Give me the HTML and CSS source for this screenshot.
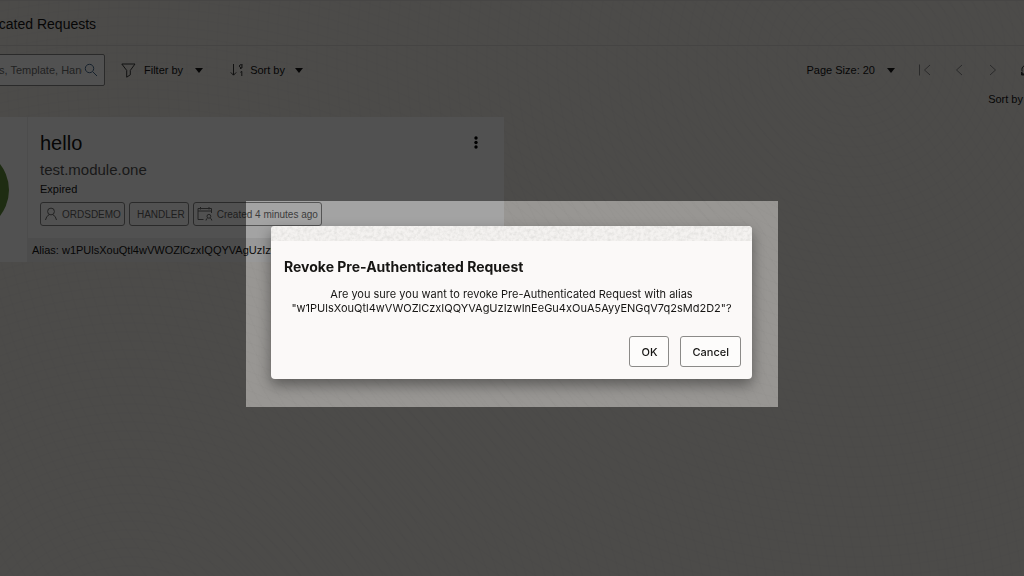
FILE: index.html
```
<!DOCTYPE html>
<html lang="en">
<head>
  <meta charset="utf-8">
  <title>Pre-Authenticated Requests</title>
  <link rel="stylesheet" href="styles.css">
</head>
<body>
  <div class="page">
    <header class="page-header">
      <h1>Pre-Authenticated Requests</h1>
    </header>

    <div class="toolbar">
      <div class="search">
        <input type="text" id="search" aria-label="Search" placeholder="Search Modules, Template, Handler">
        <svg class="icon" width="14" height="14" viewBox="0 0 14 14"><circle cx="5.5" cy="5.5" r="4.2"/><path d="M8.6 8.6L13 13"/></svg>
      </div>
      <button class="tool filter">
        <svg class="icon" width="15" height="15" viewBox="0 0 15 15"><path d="M.8 1h13.2L9.3 7.4v4.4l-3.6 2.4V7.4z"/></svg>
        Filter by
        <span class="caret"></span>
      </button>
      <button class="tool sort">
        <svg class="icon" width="14" height="14" viewBox="0 0 14 14"><path d="M3.5 1v11M.8 9.4l2.7 2.8 2.7-2.8M12 3.8a1.4 1.4 0 1 1 0-1.4M12 1v3.6q-.2 1.2-2 .9M10.4 9.3l1.4-.9V13"/></svg>
        Sort by
        <span class="caret"></span>
      </button>
      <button class="tool page-size">Page Size: 20 <span class="caret"></span></button>
      <div class="pager">
        <button class="tool" aria-label="First page"><svg class="icon muted" width="14" height="14" viewBox="0 0 14 14"><path d="M1.5 1.5v11M12 2L6.5 7l5.5 5"/></svg></button>
        <button class="tool" aria-label="Previous page"><svg class="icon muted" width="14" height="14" viewBox="0 0 14 14"><path d="M10 2L4.5 7l5.5 5"/></svg></button>
        <button class="tool" aria-label="Next page"><svg class="icon muted" width="14" height="14" viewBox="0 0 14 14"><path d="M4 2l5.5 5L4 12"/></svg></button>
        <button class="tool" aria-label="Refresh"><svg class="icon" width="14" height="14" viewBox="0 0 14 14"><path d="M2.200 8.500A5 5 0 0 1 11 4M11.500 5.500A5 5 0 0 1 4 11"/><path class="solid" d="M1.500 9v3h3z"/></svg></button>
      </div>
    </div>
    <div class="sort-row">Sort by</div>

    <main>
      <article class="card">
        <div class="card-side"><div class="avatar"></div></div>
        <div class="card-main">
          <div class="card-body">
            <div class="card-info">
              <h2>hello</h2>
              <p class="module">test.module.one</p>
              <p class="status">Expired</p>
              <div class="tags">
                <span class="tag">
                  <svg class="icon" width="14" height="14" viewBox="0 0 14 14"><circle cx="7" cy="4.5" r="3.4"/><path d="M1.5 13q.6-4 3.8-5.4M12.5 13q-.6-4-3.8-5.4"/></svg>
                  ORDSDEMO
                </span>
                <span class="tag tag-plain">HANDLER</span>
                <span class="tag">
                  <svg class="icon" width="16" height="14" viewBox="0 0 16 14"><path d="M6.5 12.5H1v-11h13.5V6M1 4h13.5M3.5 0v2.5M12 0v2.500M9 13.500q.2-2 1.700-2.600M14.800 13.500q-.2-2-1.700-2.600"/><circle cx="11.900" cy="9.300" r="1.900"/></svg>
                  Created 4 minutes ago
                </span>
              </div>
            </div>
            <button class="kebab" aria-label="Actions"><svg width="4" height="13" viewBox="0 0 4 13"><circle cx="2" cy="2" r="1.7"/><circle cx="2" cy="6.5" r="1.7"/><circle cx="2" cy="11" r="1.7"/></svg></button>
          </div>
          <div class="alias">Alias: w1PUlsXouQtl4wVWOZlCzxIQQYVAgUzIzwInEeGu4xOuA5AyyENGqV7q2sMd2D2</div>
        </div>
      </article>
    </main>
  </div>

  <div class="overlay">
    <div class="spotlight">
      <div class="dialog" role="alertdialog" aria-labelledby="dialog-title">
        <svg class="texture" width="100%" height="15">
          <filter id="grain">
            <feTurbulence type="fractalNoise" baseFrequency=".3" numOctaves="3"/>
            <feColorMatrix values="0 0 0 0 .5  0 0 0 0 .5  0 0 0 0 .48  .6 0 0 0 -.22"/>
          </filter>
          <rect width="100%" height="15" filter="url(#grain)"/>
        </svg>
        <h2 id="dialog-title">Revoke Pre-Authenticated Request</h2>
        <p>Are you sure you want to revoke Pre-Authenticated Request with alias "w1PUlsXouQtl4wVWOZlCzxIQQYVAgUzIzwInEeGu4xOuA5AyyENGqV7q2sMd2D2"?</p>
        <div class="actions">
          <button>OK</button>
          <button>Cancel</button>
        </div>
      </div>
    </div>
  </div>
</body>
</html>
```

FILE: styles.css
```
* {
  box-sizing: border-box;
}

body {
  margin: 0;
  min-height: 100vh;
  overflow: hidden;
  background-color: #989693;
  color: #0d0d0d;
  font-family: "Liberation Sans", Arial, sans-serif;
  font-size: 11px;
}

h1, h2, p {
  margin: 0;
  font-weight: normal;
}

button {
  font: inherit;
  color: inherit;
  cursor: pointer;
}

/* the list is scrolled sideways under the dialog */
.page {
  margin-left: -94px;
  min-height: 100vh;
  background:
    repeating-radial-gradient(circle at 20% 120%, transparent 0 7px, rgba(0, 0, 0, 0.012) 8px 9px),
    repeating-radial-gradient(circle at 85% 10%, transparent 0 8px, rgba(0, 0, 0, 0.012) 9px 10px);
}

.page-header {
  padding: 15px 15px 13px;
  border-top: 1px solid #8e8c8a;
  border-bottom: 1px solid #8b8987;
}

.page-header h1 {
  font-size: 14px;
  line-height: 16px;
}

.toolbar {
  display: flex;
  align-items: center;
  padding-top: 8px;
}

.icon {
  flex: none;
  fill: none;
  stroke: #222;
  stroke-width: 1;
}

.icon .solid {
  fill: #222;
}

.muted {
  stroke: #555;
}

.search {
  display: flex;
  align-items: center;
  width: 199px;
  height: 32px;
  padding: 0 6px 0 18px;
  border: 1px solid #555;
  border-radius: 2px;
  background-color: #a3a3a3;
}

.search input {
  flex: 1;
  min-width: 0;
  margin-right: 2px;
  padding: 0;
  border: 0;
  background: none;
  font: inherit;
}

.search input::placeholder {
  color: #444;
}

.search .icon {
  stroke: #2c4258;
}

.tool {
  display: flex;
  align-items: center;
  gap: 8px;
  padding: 0;
  border: 0;
  background: none;
}

.filter {
  margin-left: 16px;
}

.sort {
  margin-left: 27px;
  gap: 6px;
}

.caret {
  margin-left: 4px;
  border: 4px solid transparent;
  border-top: 5px solid #0d0d0d;
  border-bottom: 0;
}

.page-size {
  margin-left: auto;
}

.pager {
  display: flex;
  gap: 20px;
  margin: 0 -10px 0 23px;
}

.sort-row {
  padding: 6px 1px 0 0;
  line-height: 14px;
  text-align: right;
}

main {
  padding-top: 11px;
}

.card {
  display: flex;
  width: 598px;
  background-color: #a3a3a3;
}

.card-side {
  display: flex;
  align-items: center;
  justify-content: flex-end;
  width: 122px;
  padding-right: 18px;
  border-right: 1px solid #999;
}

.avatar {
  width: 84px;
  height: 84px;
  border-radius: 50%;
  background-color: #3c5824;
}

.card-main {
  flex: 1;
  min-width: 0;
}

.card-body {
  display: flex;
  align-items: flex-start;
  justify-content: space-between;
  padding: 14px 26px 12px 12px;
}

.card h2 {
  font-size: 20px;
  line-height: 24px;
}

.module {
  padding-top: 5px;
  font-size: 15px;
  line-height: 20px;
  color: #333;
}

.status {
  line-height: 18px;
}

.tags {
  display: flex;
  gap: 4px;
  padding-top: 4px;
}

.tag {
  display: flex;
  align-items: center;
  gap: 4px;
  height: 24px;
  padding: 0 3px;
  border: 1px solid #555;
  border-radius: 3px;
  font-size: 10px;
  color: #3c3c3c;
  white-space: nowrap;
}

.tag-plain {
  padding-left: 7px;
}

.tag .icon {
  stroke: #444;
}

.kebab {
  padding: 5px 0;
  border: 0;
  background: none;
}

.kebab svg {
  display: block;
}

.alias {
  padding: 0 4px;
  overflow: hidden;
  background-color: #989898;
  line-height: 24px;
  white-space: nowrap;
}

.overlay {
  position: fixed;
  inset: 0;
  display: flex;
  align-items: center;
  justify-content: center;
  padding-top: 32px;
}

.spotlight {
  width: 532px;
  max-width: 100%;
  padding: 25px 26px 28px 25px;
  overflow: hidden;
  box-shadow: 0 0 0 100vmax rgba(0, 0, 0, 0.5);
}

.dialog {
  overflow: hidden;
  border-radius: 4px;
  background-color: #fbf9f8;
  box-shadow: 0 6px 14px rgba(0, 0, 0, 0.4);
  color: #161513;
  font-family: Inter, sans-serif;
}

.texture {
  display: block;
  background-color: #f4f2f0;
}

.dialog h2 {
  padding: 16px 13px 0;
  font-size: 14px;
  font-weight: bold;
  line-height: 20px;
}

.dialog p {
  padding: 10px 12px 0;
  line-height: 14px;
  text-align: center;
}

.actions {
  display: flex;
  justify-content: flex-end;
  gap: 11px;
  padding: 21px 11px 12px;
}

.actions button {
  height: 31px;
  padding: 0 11px;
  border: 1px solid #8b8a88;
  border-radius: 3px;
  background-color: #fdfcfb;
  font-size: 11px;
  font-weight: 500;
}
```
